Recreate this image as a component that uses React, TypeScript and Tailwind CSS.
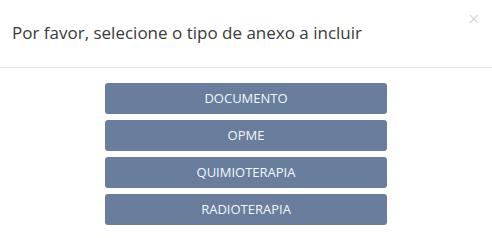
export default function App() {
  const items = ["DOCUMENTO", "OPME", "QUIMIOTERAPIA", "RADIOTERAPIA"];
  return (
    <div className="w-[492px] h-[238px] bg-white" style={{ fontFamily: '"Open Sans", sans-serif' }}>
      <div className="relative h-[68px] border-b border-[#e5e5e5] pl-[12px] pt-[20px]">
        <h4 className="text-[17px] leading-[26px] text-[#3a3a3a] font-normal">
          Por favor, selecione o tipo de anexo a incluir
        </h4>
        <span className="absolute left-[468px] top-[9px] text-[20px] leading-[20px] text-[#cccccc] font-light">
          ×
        </span>
      </div>
      <div className="flex flex-col items-center gap-[6px] pt-[15px]">
        {items.map((t) => (
          <button
            key={t}
            className="w-[282px] h-[31px] rounded-[3px] bg-[#687e9c] text-[#f4f6f9] text-[13px] flex items-center justify-center"
          >
            {t}
          </button>
        ))}
      </div>
    </div>
  );
}
